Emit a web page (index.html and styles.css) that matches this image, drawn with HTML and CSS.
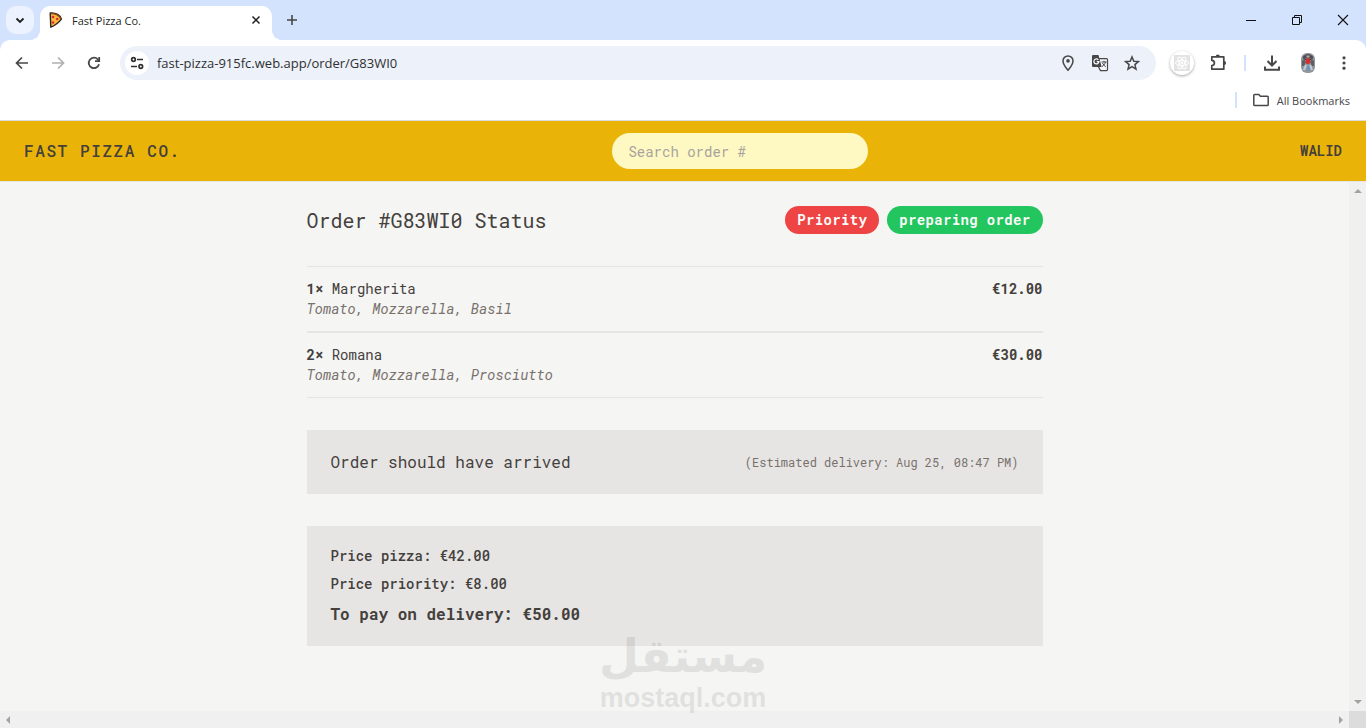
FILE: index.html
```html
<!DOCTYPE html>
<html lang="en">
<head>
  <meta charset="UTF-8" />
  <meta name="viewport" content="width=device-width, initial-scale=1.0" />
  <title>Fast Pizza Co.</title>
  <link rel="stylesheet" href="styles.css">
</head>
<body>
  <div class="browser">
    <div class="tab-strip">
      <button class="tab-search" aria-label="Search tabs">
        <svg width="12" height="12" viewBox="0 0 12 12"><path d="M2.500 4.500 6 8l3.500-3.500" fill="none" stroke="#1f1f1f" stroke-width="1.800"/></svg>
      </button>
      <div class="tab">
        <svg width="16" height="16" viewBox="0 0 16 16">
          <path d="M2.200 1C8 .5 12.500 3.200 13.400 7.200 10.500 11 6.500 13.800 2.800 15.200Z" fill="#fbb73c" stroke="#2b2320" stroke-width="1.400" stroke-linejoin="round"/>
          <path d="M2.600 1.600C7.500 1.300 11.800 3.600 12.800 7" fill="none" stroke="#8a4a1c" stroke-width="1.300"/>
          <circle cx="5" cy="5" r="1.300" fill="#d9302c"/>
          <circle cx="9.200" cy="7" r="1.300" fill="#d9302c"/>
          <circle cx="5" cy="10.500" r="1.300" fill="#d9302c"/>
        </svg>
        <span class="tab-title">Fast Pizza Co.</span>
        <button class="tab-close" aria-label="Close tab">
          <svg width="16" height="16" viewBox="0 0 16 16"><path d="m4.500 4.500 7 7m0-7-7 7" stroke="#1f1f1f" stroke-width="1.500"/></svg>
        </button>
      </div>
      <button class="new-tab" aria-label="New tab">
        <svg width="14" height="14" viewBox="0 0 14 14"><path d="M7 2v10M2 7h10" stroke="#474747" stroke-width="1.600"/></svg>
      </button>
      <div class="window-controls">
        <button aria-label="Minimize"><svg width="12" height="12" viewBox="0 0 12 12"><path d="M1 6.500h10" stroke="#111"/></svg></button>
        <button aria-label="Restore"><svg width="12" height="12" viewBox="0 0 12 12"><path d="M1.500 3.500h7v7h-7zM3.500 3.500v-2h7v7h-2" fill="none" stroke="#111"/></svg></button>
        <button aria-label="Close"><svg width="12" height="12" viewBox="0 0 12 12"><path d="m1 1 10 10M11 1 1 11" stroke="#111" stroke-width="1.100"/></svg></button>
      </div>
    </div>

    <div class="toolbar">
      <button class="tool" aria-label="Back">
        <svg width="20" height="20" viewBox="0 0 20 20"><path d="M16 10H5M10 4.500 4.500 10l5.500 5.500" fill="none" stroke="#474747" stroke-width="1.700"/></svg>
      </button>
      <button class="tool" aria-label="Forward">
        <svg width="20" height="20" viewBox="0 0 20 20"><path d="M4 10h11M10 4.500l5.500 5.500-5.500 5.500" fill="none" stroke="#b0b0b0" stroke-width="1.700"/></svg>
      </button>
      <button class="tool" aria-label="Reload">
        <svg width="20" height="20" viewBox="0 0 20 20"><path d="M15 11.200A5.200 5.200 0 1 1 13.900 6.500L15 7.700" fill="none" stroke="#474747" stroke-width="1.800"/><path d="M15.200 4v4.200H11" fill="none" stroke="#474747" stroke-width="1.800"/></svg>
      </button>
      <div class="omnibox">
        <button class="site-info" aria-label="View site information">
          <svg width="16" height="16" viewBox="0 0 16 16" fill="none" stroke="#303030" stroke-width="1.700"><circle cx="4.500" cy="4.500" r="1.800"/><path d="M8 4.500h6M2 11.500h6"/><circle cx="11.800" cy="11.500" r="1.800"/></svg>
        </button>
        <input class="address" type="text" aria-label="Address" value="fast-pizza-915fc.web.app/order/G83WI0">
        <button class="omni-icon" aria-label="Location">
          <svg width="18" height="18" viewBox="0 0 18 18"><path d="M9 16.200C6 12.700 4 10 4 6.900a5 5 0 0 1 10 0C14 10 12 12.700 9 16.200Z" fill="none" stroke="#474747" stroke-width="1.500"/><circle cx="9" cy="6.900" r="1.800" fill="#474747"/></svg>
        </button>
        <button class="omni-icon" aria-label="Translate this page">
          <svg width="18" height="18" viewBox="0 0 18 18">
            <path d="M7 4.600h8.500a1 1 0 0 1 1 1v10a1 1 0 0 1-1 1H9.500L7.500 13" fill="#f4f6fb" stroke="#474747" stroke-width="1.200"/>
            <path d="M2 1h5.500l3.200 12H2a1 1 0 0 1-1-1V2a1 1 0 0 1 1-1Z" fill="#474747"/>
            <path d="M7.300 5.800A2.500 2.500 0 1 0 7.900 7.600H5.700" fill="none" stroke="#fff" stroke-width="1.200"/>
            <path d="M10.500 8h5M13 6.800V8m1.500 0c-.5 2-1.800 3.500-3.500 4.500m.5-3.500c.7 1.500 1.800 2.800 3.200 3.800" fill="none" stroke="#474747"/>
          </svg>
        </button>
        <button class="omni-icon" aria-label="Bookmark this tab">
          <svg width="18" height="18" viewBox="0 0 18 18"><path d="m9 3 1.800 4.200 4.600.4-3.500 3 1.100 4.500L9 12.700l-4 2.400 1.100-4.500-3.500-3 4.600-.4Z" fill="none" stroke="#474747" stroke-width="1.500"/></svg>
        </button>
      </div>
      <button class="tool" aria-label="React Developer Tools">
        <span class="react-badge">
          <svg width="16" height="16" viewBox="0 0 16 16"><path d="M0 0h16v16H0z" fill="#e3e3e3"/><g fill="none" stroke="#fff"><ellipse cx="8" cy="8" rx="6.500" ry="2.500"/><ellipse cx="8" cy="8" rx="6.500" ry="2.500" transform="rotate(60 8 8)"/><ellipse cx="8" cy="8" rx="6.500" ry="2.500" transform="rotate(120 8 8)"/></g><circle cx="8" cy="8" r="1.300" fill="#fff"/></svg>
        </span>
      </button>
      <button class="tool" aria-label="Extensions">
        <svg width="20" height="20" viewBox="0 0 20 20"><path d="M3.800 3.800h12v12.400h-12v-3.600c1.700-.2 2.600-1.200 2.600-2.600S5.500 7.600 3.800 7.400Z" fill="none" stroke="#474747" stroke-width="1.700" stroke-linejoin="round"/><path d="M7.700 3.600a2.100 2.100 0 0 1 4.200 0ZM16 7.900a2.100 2.100 0 0 1 0 4.200Z" fill="#474747"/></svg>
      </button>
      <span class="divider"></span>
      <button class="tool" aria-label="Downloads">
        <svg width="20" height="20" viewBox="0 0 20 20"><path d="M10 2.500v9.500M5.500 8l4.500 4.500L14.500 8M3 13.500v3.300h14v-3.300" fill="none" stroke="#474747" stroke-width="2"/></svg>
      </button>
      <button class="tool" aria-label="Profile">
        <svg width="20" height="20" viewBox="0 0 20 20">
          <rect x="3" y="0" width="14" height="20" rx="6" fill="#92969c"/>
          <path d="M5 3.500Q10-1.500 15 3.500v2H5Z" fill="#4d4b50"/>
          <path d="m4 8 2-2 2 3-2 4H4zm12 0-2-2-2 3 2 4h2z" fill="#5c6068"/>
          <path d="m8.500 5.500 3-.5 1 3.500-1.500 2.500H8.500l-1-2.500Z" fill="#dd2e2b"/>
          <path d="m5.500 5.500 3 1.500m6-1.500-3 1.500" stroke="#3b3b40"/>
          <path d="m8 12-2 5m6-5 2 5" stroke="#c8ced6" stroke-width="2"/>
          <path d="M9.500 12.500h2v5h-2z" fill="#5a96d2"/>
          <path d="M8.500 2.500h3v2h-3z" fill="#b9b0ad"/>
        </svg>
      </button>
      <button class="tool" aria-label="Customize and control">
        <svg width="20" height="20" viewBox="0 0 20 20" fill="#474747"><circle cx="10" cy="4.800" r="1.600"/><circle cx="10" cy="10" r="1.600"/><circle cx="10" cy="15.200" r="1.600"/></svg>
      </button>
    </div>

    <div class="bookmarks">
      <span class="divider"></span>
      <a class="bookmark-folder" href="#">
        <svg width="16" height="16" viewBox="0 0 16 16"><path d="M.8 3.300a.8.8 0 0 1 .8-.8h4.200l1.600 1.700h7a.8.8 0 0 1 .8.8v7.700a.8.8 0 0 1-.8.800H1.600a.8.8 0 0 1-.8-.8Z" fill="none" stroke="#474747" stroke-width="1.500"/></svg>
        All Bookmarks
      </a>
    </div>
  </div>

  <header class="header">
    <a class="brand" href="#">Fast Pizza Co.</a>
    <form>
      <input class="search" type="text" placeholder="Search order #" aria-label="Search order number">
    </form>
    <p class="username">Walid</p>
  </header>

  <div class="viewport">
    <main class="order">
      <div class="order-head">
        <h2>Order #G83WI0 Status</h2>
        <div class="badges">
          <span class="badge priority">Priority</span>
          <span class="badge status">preparing order</span>
        </div>
      </div>

      <ul class="items">
        <li>
          <div class="item-row">
            <p><b>1×</b> Margherita</p>
            <p class="price">€12.00</p>
          </div>
          <p class="ingredients">Tomato, Mozzarella, Basil</p>
        </li>
        <li>
          <div class="item-row">
            <p><b>2×</b> Romana</p>
            <p class="price">€30.00</p>
          </div>
          <p class="ingredients">Tomato, Mozzarella, Prosciutto</p>
        </li>
      </ul>

      <div class="panel delivery">
        <p class="arrived">Order should have arrived</p>
        <p class="estimate">(Estimated delivery: Aug 25, 08:47 PM)</p>
      </div>

      <div class="panel totals">
        <p>Price pizza: €42.00</p>
        <p>Price priority: €8.00</p>
        <p class="total">To pay on delivery: €50.00</p>
      </div>
    </main>

    <div class="scrollbar vertical">
      <svg width="8" height="4" viewBox="0 0 8 4"><path d="M0 4 4 0l4 4z" fill="#a3a3a3"/></svg>
      <svg width="8" height="4" viewBox="0 0 8 4"><path d="m0 0 4 4 4-4z" fill="#a3a3a3"/></svg>
    </div>
    <div class="scrollbar horizontal">
      <svg width="4" height="8" viewBox="0 0 4 8"><path d="M4 0 0 4l4 4z" fill="#a3a3a3"/></svg>
      <svg width="4" height="8" viewBox="0 0 4 8"><path d="m0 0 4 4-4 4z" fill="#a3a3a3"/></svg>
    </div>
    <div class="corner"></div>

    <div class="watermark">
      <span class="watermark-ar" lang="ar" dir="rtl">مستقل</span>
      <span class="watermark-en">mostaql.com</span>
    </div>
  </div>
</body>
</html>
```
FILE: styles.css
```css
:root {
  --chrome-blue: #d3e3fd;
  --yellow: #eab308;
  --stone-100: #f5f5f4;
  --stone-200: #e7e5e4;
  --stone-500: #78716c;
  --stone-700: #44403c;
  --mono: "Roboto Mono", "Liberation Mono", monospace;
  --ui: "Segoe UI", "Open Sans", sans-serif;
}
* { box-sizing: border-box; }
body {
  margin: 0;
  min-height: 100vh;
  display: flex;
  flex-direction: column;
  background: var(--stone-100);
  color: var(--stone-700);
  font-family: var(--mono);
}
p, h2, ul { margin: 0; padding: 0; }
a { color: inherit; text-decoration: none; }
svg { display: block; flex: none; }
button {
  display: flex;
  align-items: center;
  justify-content: center;
  padding: 0;
  border: none;
  background: none;
}

/* browser window */
.browser {
  font-family: var(--ui);
  color: #1f1f1f;
  background: var(--chrome-blue);
  border-bottom: 1px solid #dadce0;
}
.tab-strip {
  display: flex;
  height: 40px;
  padding: 6px 0 0 6px;
}
.tab-search {
  width: 28px;
  height: 28px;
  margin-right: 6px;
  border-radius: 10px;
  background: #edf3fe;
}
.tab {
  position: relative;
  display: flex;
  align-items: center;
  gap: 8px;
  width: 232px;
  padding: 0 8px 6px;
  border-radius: 10px 10px 0 0;
  background: #fff;
}
.tab::before, .tab::after {
  content: "";
  position: absolute;
  bottom: 0;
  width: 10px;
  height: 10px;
}
.tab::before {
  right: 100%;
  background: radial-gradient(circle at 0 0, transparent 10px, #fff 10px);
}
.tab::after {
  left: 100%;
  background: radial-gradient(circle at 100% 0, transparent 10px, #fff 10px);
}
.tab-title { flex: 1; font-size: 11px; }
.new-tab { width: 28px; height: 28px; margin-left: 6px; }
.window-controls { display: flex; margin-left: auto; }
.window-controls button { width: 46px; height: 28px; }

.toolbar {
  display: flex;
  align-items: center;
  height: 46px;
  padding: 0 4px;
  border-radius: 10px 10px 0 0;
  background: #fff;
}
.tool { width: 36px; height: 36px; flex: none; }
.omnibox {
  flex: 1;
  display: flex;
  align-items: center;
  height: 34px;
  margin: 0 8px;
  padding: 0 8px 0 5px;
  border-radius: 17px;
  background: #ecf1fa;
}
.site-info {
  width: 24px;
  height: 24px;
  border-radius: 50%;
  background: #fff;
}
.address {
  flex: 1;
  padding: 0 8px;
  border: none;
  outline: none;
  background: none;
  color: #303030;
  font: 13px var(--ui);
}
.omni-icon { width: 32px; height: 32px; }
.react-badge {
  display: grid;
  place-items: center;
  width: 24px;
  height: 24px;
  border-radius: 50%;
  background: #fff;
  box-shadow: 0 1px 3px rgba(0, 0, 0, 0.35);
}
.divider {
  width: 2px;
  height: 16px;
  margin: 0 8px;
  background: var(--chrome-blue);
}
.bookmarks {
  display: flex;
  align-items: center;
  justify-content: flex-end;
  height: 34px;
  padding: 0 16px 6px 0;
  background: #fff;
}
.bookmark-folder {
  display: flex;
  align-items: center;
  gap: 8px;
  padding-left: 8px;
  color: #474747;
  font-size: 11px;
}

/* app header */
.header {
  display: flex;
  align-items: center;
  justify-content: space-between;
  padding: 12px 24px;
  background: var(--yellow);
}
.brand {
  font-size: 16px;
  font-weight: 500;
  line-height: 20px;
  text-transform: uppercase;
  letter-spacing: 0.1em;
}
.search {
  display: block;
  width: 256px;
  height: 36px;
  padding: 8px 16px;
  border: none;
  border-radius: 18px;
  background: #fef9c3;
  font: 14px/20px var(--mono);
}
.search::placeholder { color: #a8a29e; opacity: 1; }
.username {
  font-size: 14px;
  font-weight: 600;
  line-height: 20px;
  text-transform: uppercase;
}

/* page area with its scrollbars */
.viewport {
  position: relative;
  flex: 1;
  display: grid;
  grid-template-columns: 1fr 17px;
  grid-template-rows: 1fr 17px;
  border-top: 1px solid var(--stone-200);
}
.scrollbar {
  display: flex;
  align-items: center;
  justify-content: space-between;
  background: #f0f0f0;
}
.vertical { flex-direction: column; padding: 7px 0; }
.horizontal { padding: 0 6px; }
.corner { background: #dcdcdc; }

.order {
  width: 100%;
  max-width: 768px;
  margin: 0 auto;
  padding: 24px 16px;
  display: flex;
  flex-direction: column;
  gap: 32px;
  font-size: 14px;
  line-height: 20px;
}
.order-head, .item-row, .delivery {
  display: flex;
  align-items: center;
  justify-content: space-between;
}
.order-head h2 {
  font-size: 20px;
  line-height: 28px;
  font-weight: normal;
}
.badges { display: flex; gap: 8px; }
.badge {
  padding: 4px 12px;
  border-radius: 14px;
  color: #fafaf9;
  font-weight: bold;
  letter-spacing: 0.025em;
}
.priority { background: #ef4444; }
.status { background: #22c55e; }

.items {
  list-style: none;
  border-top: 1px solid var(--stone-200);
  border-bottom: 1px solid var(--stone-200);
}
.items li { padding: 12px 0; }
.items li + li { border-top: 2px solid var(--stone-200); }
.price { font-weight: bold; }
.ingredients { color: var(--stone-500); font-style: italic; }

.panel { padding: 20px 24px; background: var(--stone-200); }
.arrived { font-size: 16px; line-height: 24px; }
.estimate { color: var(--stone-500); font-size: 12px; }
.totals {
  display: flex;
  flex-direction: column;
  gap: 8px;
  font-weight: 500;
}
.total { font-size: 16px; line-height: 24px; font-weight: bold; }

.watermark {
  position: absolute;
  left: 0;
  right: 0;
  bottom: 14px;
  display: flex;
  flex-direction: column;
  align-items: center;
  color: #000;
  opacity: 0.08;
  font-weight: bold;
  pointer-events: none;
}
.watermark-ar { font: bold 46px/54px "DejaVu Sans", sans-serif; }
.watermark-en { font: bold 27px/31px "Liberation Sans", sans-serif; }
```
